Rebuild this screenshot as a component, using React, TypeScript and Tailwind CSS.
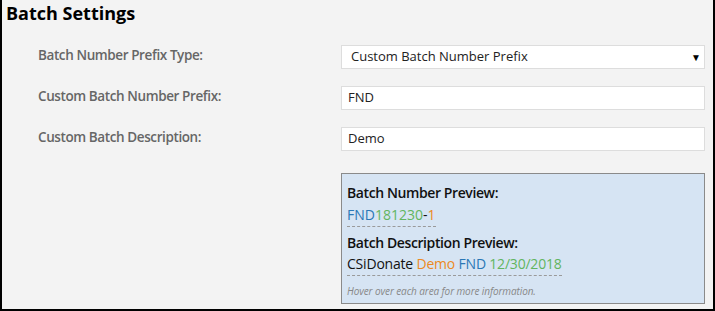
import React from 'react';

const font = { fontFamily: '"Open Sans", "Noto Sans", Arial, sans-serif' };

function Field({ value, select }: { value: string; select?: boolean }) {
	return (
		<div className="flex h-[24px] w-[364px] items-center justify-between border border-[#dddddd] bg-white pl-[6px] pr-[3px] text-[13px] text-[#222]">
			<span className={select ? 'pl-[3px]' : ''}>{value}</span>
			{select && <span className="text-[10px] leading-none text-black">▼</span>}
		</div>
	);
}

export default function App() {
	const rows = [
		{ label: 'Batch Number Prefix Type:', value: 'Custom Batch Number Prefix', select: true },
		{ label: 'Custom Batch Number Prefix:', value: 'FND' },
		{ label: 'Custom Batch Description:', value: 'Demo' },
	];

	return (
		<div style={font} className="h-[311px] w-[715px] overflow-hidden border-x-2 border-b-2 border-black bg-[#f3f3f3]">
			<h1 className="pl-[4px] pt-[1px] text-[18px] font-bold leading-[24px] text-black">Batch Settings</h1>

			<div className="mt-[20px] grid grid-cols-[303px_364px] gap-y-[17px] pl-[36px]">
				{rows.map((r) => (
					<React.Fragment key={r.label}>
						<div className="flex h-[24px] items-center pb-[4px] text-[13.5px] font-semibold tracking-[-0.4px] text-[#666]">{r.label}</div>
						<Field value={r.value} select={r.select} />
					</React.Fragment>
				))}

				<div />
				<div className="mt-[5px] h-[131px] border border-[#8a8a8a] bg-[#d6e4f3] px-[5px] pt-[9px] text-[14px] text-[#111]">
					<div className="font-semibold leading-[20px] tracking-[-0.4px]">Batch Number Preview:</div>
					<div className="mt-[1px]">
						<span className="inline-block border-b border-dashed border-[#9a9a9a] pb-[1px] leading-[20px]">
							<span className="text-[#2a77b6]">FND</span>
							<span className="text-[#62b55f]">181230</span>
							<span>-</span>
							<span className="text-[#ec8a22]">1</span>
						</span>
					</div>
					<div className="mt-[6px] font-semibold leading-[20px] tracking-[-0.4px]">Batch Description Preview:</div>
					<div>
						<span className="inline-block border-b border-dashed border-[#9a9a9a] pb-[1px] leading-[20px] tracking-[-0.2px]">
							CSiDonate <span className="text-[#ec8a22]">Demo</span>{' '}
							<span className="text-[#2a77b6]">FND</span>{' '}
							<span className="text-[#62b55f]">12/30/2018</span>
						</span>
					</div>
					<div className="mt-[8px] text-[10px] italic leading-[14px] tracking-[-0.1px] text-[#888]">Hover over each area for more information.</div>
				</div>
			</div>
		</div>
	);
}
